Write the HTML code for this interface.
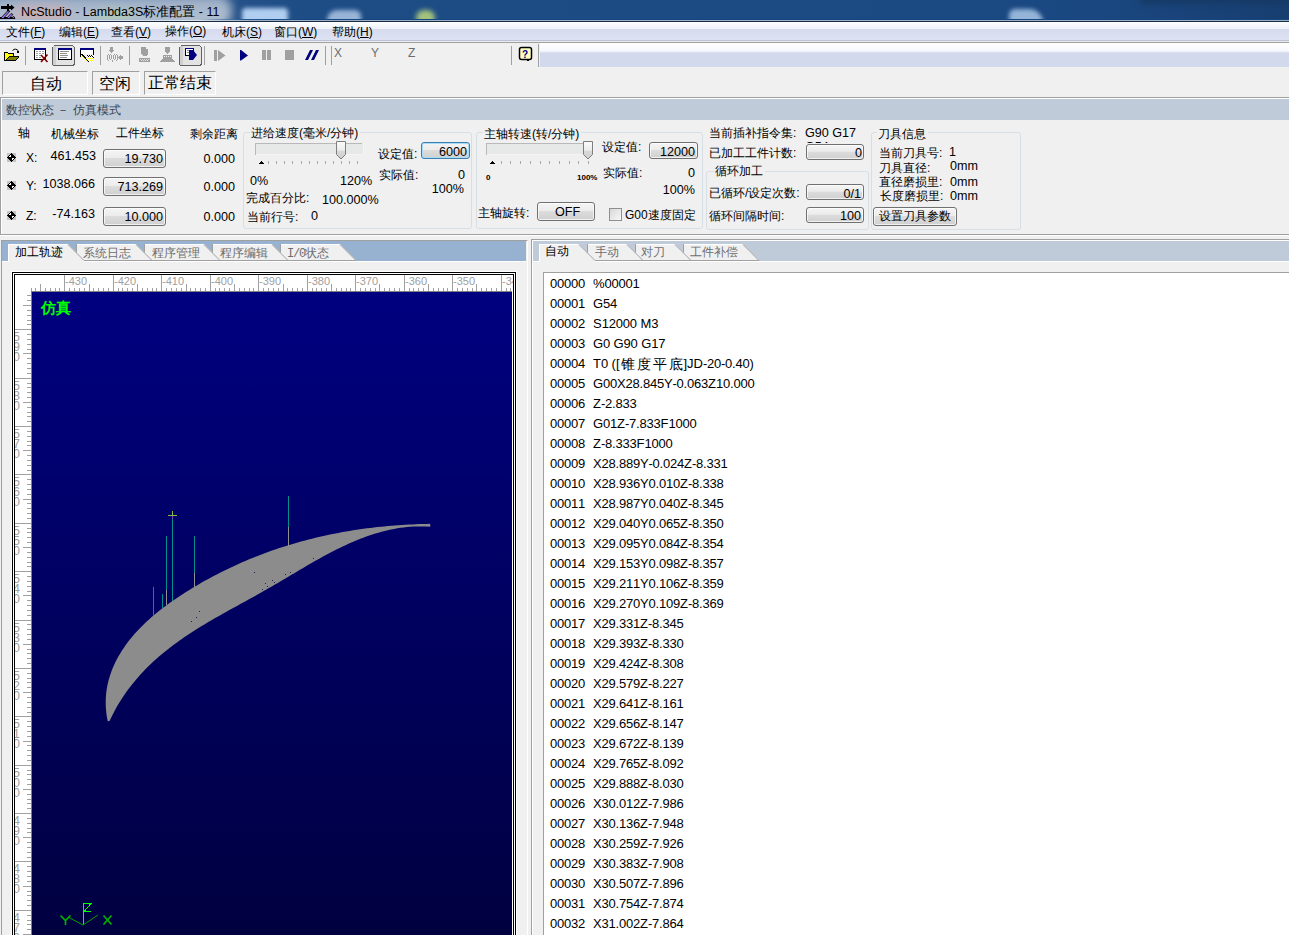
<!DOCTYPE html>
<html><head><meta charset="utf-8">
<style>
*{margin:0;padding:0;box-sizing:border-box}
html,body{width:1289px;height:935px;overflow:hidden;background:#f0f0f0;font-family:"Liberation Sans",sans-serif;font-size:12px;color:#000}
.a{position:absolute}
.t{position:absolute;white-space:pre;line-height:14px}
.n{font-size:12.6px}
.tg{color:#6d6d6d}
#title{left:0;top:0;width:1289px;height:21px;background:#1b4a82}
#menu{left:0;top:21px;width:1289px;height:22px;background:linear-gradient(#1c2c40 0,#1c2c40 1px,#fdfeff 1px,#eef1f8 8px,#d5dbee 8px,#dde3f3 19px,#bcc2d6 19px,#bcc2d6 20px,#ececec 20px,#ececec 21px,#a0a0a0 21px,#a0a0a0 22px)}
.sunk{position:absolute;border-top:1px solid #a0a0a0;border-left:1px solid #a0a0a0;border-bottom:1px solid #fff;border-right:1px solid #fff}
.btn{position:absolute;border:1px solid #707070;border-radius:3px;background:linear-gradient(#f4f4f4,#ececec 45%,#dcdcdc 50%,#d0d0d0);box-shadow:inset 0 0 0 1px rgba(255,255,255,.7)}
.grp{position:absolute;border:1px solid #d5dfe5;border-radius:3px}
.glb{position:absolute;height:4px;background:#f0f0f0}
.hl{position:absolute;height:1px;background:#a0a0a0}
.dia{position:absolute;width:9px;height:9px;background:#c8c8c8}
.dia:after{content:"";position:absolute;left:1px;top:1px;width:7px;height:7px;background:#000;transform:rotate(45deg)}
.chk{position:absolute;width:13px;height:13px;border:1px solid #8f8f8f;background:linear-gradient(135deg,#d8d8d8,#f8f8f8)}
.sel{border-color:#3c7fb1;box-shadow:inset 0 0 0 1px #a8dcf6}
</style></head><body>
<div id="title" class="a" style="overflow:hidden">
<div class="a" style="left:0;top:0;width:1289px;height:21px;background:linear-gradient(90deg,#3a6090 0,#1e4d86 300px,#1b4a83 900px,#1a4780 1100px,#183e70 1289px)"></div>
<div class="a" style="left:1140px;top:-6px;width:180px;height:10px;background:#163a66;filter:blur(3px)"></div>
<div class="a" style="left:242px;top:8px;width:46px;height:18px;background:#b0cef0;border-radius:4px;filter:blur(2px)"></div>
<div class="a" style="left:327px;top:10px;width:34px;height:16px;background:#98b4d6;border-radius:10px 6px 0 0;filter:blur(2px)"></div>
<div class="a" style="left:416px;top:10px;width:19px;height:16px;background:#a4c47c;border-radius:9px;filter:blur(2.5px)"></div>
<div class="a" style="left:1009px;top:9px;width:34px;height:16px;background:#94b4d8;border-radius:6px 14px 0 0;filter:blur(2px)"></div>
<div class="a" style="left:-12px;top:-6px;width:244px;height:34px;background:linear-gradient(#8ea4c0,#a8b8cc 40%,#b4c2d2);border-radius:16px;filter:blur(5px)"></div>
<div class="a" style="left:14px;top:6px;width:56px;height:18px;background:#ccaeb2;border-radius:10px;filter:blur(6px);opacity:.85"></div>
<div class="a" style="left:96px;top:10px;width:36px;height:14px;background:#b0ccb4;border-radius:8px;filter:blur(5px);opacity:.8"></div>
<div class="a" style="left:0;top:19px;width:1289px;height:1px;background:linear-gradient(90deg,#a8b8cc 0,#b0bece 200px,#2a5a90 240px,#16467f 300px)"></div>
<div class="a" style="left:0;top:20px;width:1289px;height:1px;background:linear-gradient(90deg,#dce2ec 0,#d8e0ea 200px,#9aaec8 250px,#9aaec8)"></div>
</div>

<svg class="a" style="left:0;top:0" width="20" height="21">
<g shape-rendering="crispEdges" fill="#000"><rect x="1" y="6" width="10" height="3"/><rect x="7" y="4" width="2" height="7"/><rect x="0" y="17" width="15" height="2"/></g>
<path d="M11,4.5L14.5,7.5L11,10.5z" fill="#000"/>
<path d="M0.5,18.5L7.5,11H10L3.5,18.5z" fill="#a070f8" stroke="#000" stroke-width="0.8"/>
<path d="M6.5,18.5L11,13.5L13,14.5L9,18.5z" fill="#a070f8" stroke="#000" stroke-width="0.8"/>
<path d="M11.5,18.5L13.5,16.2L15,18.5z" fill="#a070f8" stroke="#000" stroke-width="0.8"/>
</svg>
<div id="menu" class="a"></div>
<div class="a" style="left:540px;top:43px;width:749px;height:24px;background:linear-gradient(#ffffff,#f7f8fc 8px,#d3d9ec 10px,#d3d9ec)"></div>
<svg class="a" style="left:0;top:43px" width="560" height="25" shape-rendering="crispEdges">
<g transform="translate(0,-43)">
<!-- open folder -->
<path d="M4,52h4v1h6v3h5v1l-4,4H4z" fill="#000"/>
<path d="M5,53h3v1h5v2H9l-4,4z" fill="#ffff00"/>
<path d="M9,57h9l-3,3H6z" fill="#808000"/>
<path d="M12.5,50.5q3,-3 6,0.5" stroke="#000" fill="none" shape-rendering="auto"/>
<path d="M17,51h2v2h-2z" fill="#000"/>
<!-- separators -->
<path d="M25.5,46V65M100.5,46V65M129.5,46V65M204.5,46V65M325.5,46V65M331.5,46V65M511.5,46V65M538.5,44V67" stroke="#a0a0a0"/>
<!-- icon table with X -->
<rect x="34" y="48" width="12" height="12" fill="#000"/>
<rect x="34" y="48" width="12" height="2" fill="#000080"/>
<rect x="35" y="50" width="10" height="9" fill="#fff"/>
<path d="M36,51.5h2M39,51.5h2M42,51.5h2M36,53.5h2M39,53.5h2M42,53.5h2M36,55.5h2M39,55.5h2M36,57.5h2M39,57.5h2" stroke="#a0a0a0"/>
<path d="M41,55L47.5,62M47.5,54.5L41,62" stroke="#800000" stroke-width="1.6" shape-rendering="auto"/>
<!-- pressed button 1 -->
<rect x="52.5" y="45.5" width="22" height="20" rx="3" fill="#e3e3e3" stroke="#606060"/>
<rect x="53" y="46" width="3" height="19" fill="#d0d0d0"/>
<rect x="58" y="48" width="14" height="12" fill="#000"/>
<rect x="58" y="48" width="14" height="2" fill="#000080"/>
<rect x="59" y="50" width="12" height="9" fill="#fff"/>
<path d="M60,51.5h9M60,53.5h7M60,55.5h8M60,57.5h7" stroke="#909090"/>
<!-- icon 4 -->
<defs>
<pattern id="dk" width="2" height="2" patternUnits="userSpaceOnUse"><rect width="2" height="2" fill="#fff"/><rect width="1" height="1" fill="#000"/><rect x="1" y="1" width="1" height="1" fill="#000"/></pattern>
<pattern id="dy" width="2" height="2" patternUnits="userSpaceOnUse"><rect width="2" height="2" fill="#fff"/><rect width="1" height="1" fill="#ffff00"/><rect x="1" y="1" width="1" height="1" fill="#ffff00"/></pattern>
</defs>
<rect x="80" y="48" width="14" height="2" fill="#000080"/>
<rect x="80" y="50" width="1" height="7" fill="#000"/>
<rect x="93" y="50" width="1" height="5" fill="#000"/>
<rect x="81" y="50" width="12" height="4" fill="#fff"/>
<rect x="81" y="54" width="3" height="3" fill="#fff"/>
<path d="M81,54h2l6,8h-2z" fill="#000"/>
<path d="M82,56h1l5,6h-1z" fill="#ffff00"/>
<path d="M86,55h6l2,2v3h-3l-3,-2z" fill="url(#dk)"/>
<path d="M87,57l3,5h4v-3l-2,-2z" fill="url(#dy)"/>
<!-- (0,0) icon gray -->
<g fill="#a0a0a0">
<rect x="110" y="47" width="3" height="3"/><path d="M108,50h7l-3.5,3z"/>
<path d="M107,55h1v5h-1zM108,54h1v1h-1zM108,60h1v1h-1z"/>
<path d="M109,55h1v4h-1zM111,55h1v4h-1zM110,54h1v1h-1zM110,59h1v1h-1z"/>
<path d="M113,55h1v4h-1zM115,55h1v4h-1zM114,54h1v1h-1zM114,59h1v1h-1z"/>
<path d="M117,55h1v5h-1zM116,54h1v1h-1zM116,60h1v1h-1z"/>
<rect x="112" y="60" width="1" height="2"/>
<path d="M118,57.5l3,-3v6z"/><rect x="120" y="56" width="3" height="3"/>
</g>
<!-- tool icon gray -->
<g fill="#a0a0a0">
<path d="M141,47h5v2h2v5l-2,2h-3l-2,-2z"/>
<rect x="139" y="58" width="11" height="4"/>
</g>
<path d="M140,59.5h1M142,59.5h1M144,59.5h1M146,59.5h1M148,59.5h1M141,60.5h1M143,60.5h1M145,60.5h1M147,60.5h1" stroke="#e0e0e0"/>
<g fill="#a0a0a0">
<rect x="165" y="47" width="5" height="4"/><path d="M164,51h7l-3.5,3z"/>
<rect x="163" y="55" width="9" height="4"/><path d="M162,59h11l2,3H160z"/>
</g>
<path d="M164,56.5h1M166,56.5h1M168,56.5h1M170,56.5h1" stroke="#f0f0f0"/>
<!-- pressed button 2 -->
<rect x="179.5" y="45.5" width="22" height="20" rx="3" fill="#e3e3e3" stroke="#606060"/>
<rect x="180" y="46" width="3" height="19" fill="#d0d0d0"/>
<rect x="185" y="48" width="9" height="8" fill="#000"/>
<rect x="185" y="48" width="9" height="1" fill="#000080"/>
<rect x="186" y="49" width="7" height="6" fill="#fff"/>
<path d="M187,50.5h4M187,52.5h4" stroke="#909090"/>
<path d="M189,50h4l4,5l-4,5h-4z" fill="#000080" shape-rendering="auto"/>
<!-- play controls -->
<g fill="#a0a0a0">
<rect x="214" y="50" width="3" height="11"/><path d="M218,50l7.5,5.5L218,61z" shape-rendering="auto"/>
<rect x="262" y="50" width="4" height="10"/><rect x="267" y="50" width="4" height="10"/>
<rect x="285" y="50" width="9" height="10"/>
</g>
<path d="M240,50h1l7,5.5l-7,5h-1z" fill="#000080" shape-rendering="auto"/>
<path d="M305,60l5,-10h3l-5,10zM311,60l5,-10h3l-5,10z" fill="#000080" shape-rendering="auto"/>
<!-- help -->
<rect x="519.5" y="47.5" width="12" height="12" rx="2" fill="#ffffc0" stroke="#000" stroke-width="1.5" shape-rendering="auto"/>
<path d="M527,59l1,3l2,-3z" fill="#000"/>
<text x="522" y="57.5" font-size="10" font-weight="bold" fill="#000080" font-family="Liberation Sans" shape-rendering="auto">?</text>
</g>
</svg>
<div class="sunk" style="left:2px;top:71px;width:86px;height:24px"></div>
<div class="sunk" style="left:92px;top:71px;width:48px;height:24px"></div>
<div class="sunk" style="left:144px;top:71px;width:72px;height:24px"></div>
<div class="hl" style="left:0;top:97px;width:1289px"></div>
<div class="a" style="left:1px;top:98px;width:1288px;height:1px;background:#fff"></div>
<div class="a" style="left:2px;top:99px;width:1287px;height:21px;background:#bfcbd9"></div>
<div class="a" style="left:0;top:97px;width:1px;height:138px;background:#a0a0a0"></div>
<div class="a" style="left:1px;top:98px;width:1px;height:136px;background:#fff"></div>
<div class="hl" style="left:0;top:234px;width:1289px"></div>
<div class="a" style="left:0;top:235px;width:1289px;height:1px;background:#fff"></div>
<svg class="a" style="left:0;top:0" width="20" height="235" shape-rendering="crispEdges"><rect x="7" y="153" width="9" height="9" fill="#c4c4c4"/><g fill="#000"><rect x="11" y="153" width="1" height="1"/><rect x="10" y="154" width="3" height="1"/><rect x="9" y="155" width="5" height="1"/><rect x="8" y="156" width="7" height="1"/><rect x="7" y="157" width="9" height="1"/><rect x="8" y="158" width="7" height="1"/><rect x="9" y="159" width="5" height="1"/><rect x="10" y="160" width="3" height="1"/><rect x="11" y="161" width="1" height="1"/></g><g fill="#fff"><rect x="10" y="155" width="1" height="2"/><rect x="9" y="156" width="1" height="1"/><rect x="12" y="158" width="2" height="1"/><rect x="12" y="159" width="1" height="1"/></g></svg>
<svg class="a" style="left:0;top:0" width="20" height="235" shape-rendering="crispEdges"><rect x="7" y="181" width="9" height="9" fill="#c4c4c4"/><g fill="#000"><rect x="11" y="181" width="1" height="1"/><rect x="10" y="182" width="3" height="1"/><rect x="9" y="183" width="5" height="1"/><rect x="8" y="184" width="7" height="1"/><rect x="7" y="185" width="9" height="1"/><rect x="8" y="186" width="7" height="1"/><rect x="9" y="187" width="5" height="1"/><rect x="10" y="188" width="3" height="1"/><rect x="11" y="189" width="1" height="1"/></g><g fill="#fff"><rect x="10" y="183" width="1" height="2"/><rect x="9" y="184" width="1" height="1"/><rect x="12" y="186" width="2" height="1"/><rect x="12" y="187" width="1" height="1"/></g></svg>
<svg class="a" style="left:0;top:0" width="20" height="235" shape-rendering="crispEdges"><rect x="7" y="211" width="9" height="9" fill="#c4c4c4"/><g fill="#000"><rect x="11" y="211" width="1" height="1"/><rect x="10" y="212" width="3" height="1"/><rect x="9" y="213" width="5" height="1"/><rect x="8" y="214" width="7" height="1"/><rect x="7" y="215" width="9" height="1"/><rect x="8" y="216" width="7" height="1"/><rect x="9" y="217" width="5" height="1"/><rect x="10" y="218" width="3" height="1"/><rect x="11" y="219" width="1" height="1"/></g><g fill="#fff"><rect x="10" y="213" width="1" height="2"/><rect x="9" y="214" width="1" height="1"/><rect x="12" y="216" width="2" height="1"/><rect x="12" y="217" width="1" height="1"/></g></svg>
<div class="btn" style="left:103px;top:149px;width:63px;height:19px"></div>
<div class="btn" style="left:103px;top:177px;width:63px;height:19px"></div>
<div class="btn" style="left:103px;top:207px;width:63px;height:19px"></div>
<div class="grp" style="left:243px;top:132px;width:229px;height:97px"></div>
<svg class="a" style="left:240px;top:135px" width="370" height="35" shape-rendering="crispEdges">
<g transform="translate(-240,-135)">
<rect x="255" y="143" width="108" height="12" fill="#e7e9e9"/>
<path d="M255.5,155V143.5H362" stroke="#b9b9b9" fill="none"/>
<path d="M256,154.5H363V143" stroke="#f4f4f4" fill="none"/>
<path d="M258,164h6l-3,-3z" fill="#000"/>
<path d="M268.5,161V164M276.5,161V164M284.5,161V164M292.5,161V164M301.5,161V164M309.5,161V164M317.5,161V164M325.5,161V164M333.5,161V164M341.5,161V164M349.5,161V164M357.5,161V164" stroke="#a8a8a8"/>
<path d="M336.5,141.5h9v13l-4.5,4.5l-4.5,-4.5z" fill="url(#thg)" stroke="#7e7e7e" shape-rendering="auto"/>
<rect x="486" y="143" width="107" height="12" fill="#e7e9e9"/>
<path d="M486.5,155V143.5H592" stroke="#b9b9b9" fill="none"/>
<path d="M487,154.5H593V143" stroke="#f4f4f4" fill="none"/>
<path d="M489,164h6l-3,-3z" fill="#000"/>
<path d="M501.5,161V164M510.5,161V164M520.5,161V164M530.5,161V164M540.5,161V164M549.5,161V164M559.5,161V164M569.5,161V164M578.5,161V164M588.5,161V164" stroke="#a8a8a8"/>
<path d="M583.5,141.5h9v13l-4.5,4.5l-4.5,-4.5z" fill="url(#thg)" stroke="#7e7e7e" shape-rendering="auto"/>
<defs><linearGradient id="thg" x1="0" y1="0" x2="0" y2="1"><stop offset="0" stop-color="#fbfbfb"/><stop offset="0.5" stop-color="#ececec"/><stop offset="0.55" stop-color="#d8d8d8"/><stop offset="1" stop-color="#d0d0d0"/></linearGradient></defs>
</g>
</svg>

<div class="btn sel" style="left:421px;top:142px;width:49px;height:17px"></div>
<div class="grp" style="left:476px;top:132px;width:227px;height:97px"></div>
<div class="btn" style="left:649px;top:142px;width:49px;height:17px"></div>
<div class="btn" style="left:537px;top:202px;width:58px;height:19px"></div>
<div class="chk" style="left:609px;top:208px"></div>
<div class="btn" style="left:806px;top:144px;width:58px;height:16px"></div>
<div class="grp" style="left:706px;top:171px;width:163px;height:59px"></div>
<div class="btn" style="left:806px;top:184px;width:58px;height:16px"></div>
<div class="btn" style="left:806px;top:207px;width:58px;height:16px"></div>
<div class="grp" style="left:871px;top:132px;width:150px;height:98px"></div>
<div class="btn" style="left:873px;top:207px;width:84px;height:19px"></div>
<div class="a" style="left:805px;top:141px;width:40px;height:2px;overflow:hidden"><div class="t n" style="left:0;top:-1px">G54</div></div>
<div class="a" style="left:1px;top:240px;width:527px;height:700px;border-left:1px solid #a0a0a0;border-top:1px solid #a0a0a0;border-right:1px solid #fff"></div>
<div class="a" style="left:2px;top:241px;width:524px;height:20px;background:#97b1d0"></div>
<div class="a" style="left:531px;top:239px;width:760px;height:700px;border-left:1px solid #a0a0a0;border-top:1px solid #a0a0a0"></div>
<div class="a" style="left:532px;top:240px;width:760px;height:700px;border-left:1px solid #fff;border-top:1px solid #fff"></div>
<div class="a" style="left:533px;top:241px;width:756px;height:20px;background:#bfcbd9"></div>
<svg class="a" style="left:0;top:0" width="1289" height="935">
<path d="M2,261.5H526" stroke="#fff"/>
<polygon points="280,261 280,244 340,244 356,260 356,261" fill="#f0f0f0"/><path d="M281,244.5H340" stroke="#fff" fill="none"/><path d="M280.5,261V244" stroke="#a0a0a0" fill="none"/><path d="M340,244.5L356,260.5" stroke="#a0a0a0" fill="none"/><path d="M280,260.5H356" stroke="#a0a0a0" fill="none"/>
<polygon points="212,261 212,244 272,244 288,260 288,261" fill="#f0f0f0"/><path d="M213,244.5H272" stroke="#fff" fill="none"/><path d="M212.5,261V244" stroke="#a0a0a0" fill="none"/><path d="M272,244.5L288,260.5" stroke="#a0a0a0" fill="none"/><path d="M212,260.5H288" stroke="#a0a0a0" fill="none"/>
<polygon points="144,261 144,244 204,244 220,260 220,261" fill="#f0f0f0"/><path d="M145,244.5H204" stroke="#fff" fill="none"/><path d="M144.5,261V244" stroke="#a0a0a0" fill="none"/><path d="M204,244.5L220,260.5" stroke="#a0a0a0" fill="none"/><path d="M144,260.5H220" stroke="#a0a0a0" fill="none"/>
<polygon points="76,261 76,244 136,244 152,260 152,261" fill="#f0f0f0"/><path d="M77,244.5H136" stroke="#fff" fill="none"/><path d="M76.5,261V244" stroke="#a0a0a0" fill="none"/><path d="M136,244.5L152,260.5" stroke="#a0a0a0" fill="none"/><path d="M76,260.5H152" stroke="#a0a0a0" fill="none"/>
<polygon points="8,262 8,244 68,244 84,260 84,262" fill="#f0f0f0"/><path d="M8.5,262V244.5H68" stroke="#fff" fill="none"/><path d="M68,244.5L84,260.5" stroke="#a0a0a0" fill="none"/>
<path d="M533,261.5H1289" stroke="#fff"/>
<polygon points="683,261 683,244 743,244 759,260 759,261" fill="#f0f0f0"/><path d="M684,244.5H743" stroke="#fff" fill="none"/><path d="M683.5,261V244" stroke="#a0a0a0" fill="none"/><path d="M743,244.5L759,260.5" stroke="#a0a0a0" fill="none"/><path d="M683,260.5H759" stroke="#a0a0a0" fill="none"/>
<polygon points="635,261 635,244 675,244 691,260 691,261" fill="#f0f0f0"/><path d="M636,244.5H675" stroke="#fff" fill="none"/><path d="M635.5,261V244" stroke="#a0a0a0" fill="none"/><path d="M675,244.5L691,260.5" stroke="#a0a0a0" fill="none"/><path d="M635,260.5H691" stroke="#a0a0a0" fill="none"/>
<polygon points="587,261 587,244 627,244 643,260 643,261" fill="#f0f0f0"/><path d="M588,244.5H627" stroke="#fff" fill="none"/><path d="M587.5,261V244" stroke="#a0a0a0" fill="none"/><path d="M627,244.5L643,260.5" stroke="#a0a0a0" fill="none"/><path d="M587,260.5H643" stroke="#a0a0a0" fill="none"/>
<polygon points="539,262 539,244 579,244 595,260 595,262" fill="#f0f0f0"/><path d="M539.5,262V244.5H579" stroke="#fff" fill="none"/><path d="M579,244.5L595,260.5" stroke="#a0a0a0" fill="none"/>
</svg>
<div class="a" style="left:543px;top:272px;width:750px;height:670px;background:#fff;border-left:1px solid #a0a0a0;border-top:1px solid #a0a0a0"></div>
<svg class="a" style="left:0;top:0" width="1289" height="935" font-family="Liberation Sans" font-size="13">
<text y="288" x="550.0 557.0 564.0 571.0 578.0">00000</text>
<text y="288" x="593.0 604.5 611.5 618.5 625.5 632.5">%00001</text>
<text y="308" x="550.0 557.0 564.0 571.0 578.0">00001</text>
<text y="308" x="593.0 603.0 610.0">G54</text>
<text y="328" x="550.0 557.0 564.0 571.0 578.0">00002</text>
<text y="328" x="593.0 601.8 608.8 615.8 622.8 629.8 636.8 640.4 651.2">S12000 M3</text>
<text y="348" x="550.0 557.0 564.0 571.0 578.0">00003</text>
<text y="348" x="593.0 603.0 610.0 613.6 623.6 630.6 637.6 641.2 651.2 658.2">G0 G90 G17</text>
<text y="368" x="550.0 557.0 564.0 571.0 578.0">00004</text>
<text y="368" x="593.0 601.0 608.0 611.6 615.9 683.5 687.1 693.6 703.0 707.0 714.0 721.0 725.0 732.0 735.5 742.5 749.5">T0 ([]JD-20-0.40)</text>
<text y="369" font-size="13.5" x="621.0 637.0 653.0 669.0">锥度平底</text>
<text y="388" x="550.0 557.0 564.0 571.0 578.0">00005</text>
<text y="388" x="593.0 603.0 610.0 617.0 625.5 632.5 639.5 643.0 650.0 657.0 664.0 672.5 676.5 683.5 687.0 694.0 701.0 708.0 716.0 723.0 730.0 733.5 740.5 747.5">G00X28.845Y-0.063Z10.000</text>
<text y="408" x="550.0 557.0 564.0 571.0 578.0">00006</text>
<text y="408" x="593.0 601.0 605.0 612.0 615.5 622.5 629.5">Z-2.833</text>
<text y="428" x="550.0 557.0 564.0 571.0 578.0">00007</text>
<text y="428" x="593.0 603.0 610.0 617.0 625.0 629.0 636.0 639.5 646.5 653.5 660.5 668.5 675.5 682.5 689.5">G01Z-7.833F1000</text>
<text y="448" x="550.0 557.0 564.0 571.0 578.0">00008</text>
<text y="448" x="593.0 601.0 605.0 612.0 615.5 622.5 629.5 636.5 644.5 651.5 658.5 665.5">Z-8.333F1000</text>
<text y="468" x="550.0 557.0 564.0 571.0 578.0">00009</text>
<text y="468" x="593.0 601.5 608.5 615.5 619.0 626.0 633.0 640.0 648.5 652.5 659.5 663.0 670.0 677.0 684.0 692.0 696.0 703.0 706.5 713.5 720.5">X28.889Y-0.024Z-8.331</text>
<text y="488" x="550.0 557.0 564.0 571.0 578.0">00010</text>
<text y="488" x="593.0 601.5 608.5 615.5 619.0 626.0 633.0 640.0 648.5 655.5 659.0 666.0 673.0 680.0 688.0 692.0 699.0 702.5 709.5 716.5">X28.936Y0.010Z-8.338</text>
<text y="508" x="550.0 557.0 564.0 571.0 578.0">00011</text>
<text y="508" x="593.0 601.5 608.5 615.5 619.0 626.0 633.0 640.0 648.5 655.5 659.0 666.0 673.0 680.0 688.0 692.0 699.0 702.5 709.5 716.5">X28.987Y0.040Z-8.345</text>
<text y="528" x="550.0 557.0 564.0 571.0 578.0">00012</text>
<text y="528" x="593.0 601.5 608.5 615.5 619.0 626.0 633.0 640.0 648.5 655.5 659.0 666.0 673.0 680.0 688.0 692.0 699.0 702.5 709.5 716.5">X29.040Y0.065Z-8.350</text>
<text y="548" x="550.0 557.0 564.0 571.0 578.0">00013</text>
<text y="548" x="593.0 601.5 608.5 615.5 619.0 626.0 633.0 640.0 648.5 655.5 659.0 666.0 673.0 680.0 688.0 692.0 699.0 702.5 709.5 716.5">X29.095Y0.084Z-8.354</text>
<text y="568" x="550.0 557.0 564.0 571.0 578.0">00014</text>
<text y="568" x="593.0 601.5 608.5 615.5 619.0 626.0 633.0 640.0 648.5 655.5 659.0 666.0 673.0 680.0 688.0 692.0 699.0 702.5 709.5 716.5">X29.153Y0.098Z-8.357</text>
<text y="588" x="550.0 557.0 564.0 571.0 578.0">00015</text>
<text y="588" x="593.0 601.5 608.5 615.5 619.0 626.0 633.0 640.0 648.5 655.5 659.0 666.0 673.0 680.0 688.0 692.0 699.0 702.5 709.5 716.5">X29.211Y0.106Z-8.359</text>
<text y="608" x="550.0 557.0 564.0 571.0 578.0">00016</text>
<text y="608" x="593.0 601.5 608.5 615.5 619.0 626.0 633.0 640.0 648.5 655.5 659.0 666.0 673.0 680.0 688.0 692.0 699.0 702.5 709.5 716.5">X29.270Y0.109Z-8.369</text>
<text y="628" x="550.0 557.0 564.0 571.0 578.0">00017</text>
<text y="628" x="593.0 601.5 608.5 615.5 619.0 626.0 633.0 640.0 648.0 652.0 659.0 662.5 669.5 676.5">X29.331Z-8.345</text>
<text y="648" x="550.0 557.0 564.0 571.0 578.0">00018</text>
<text y="648" x="593.0 601.5 608.5 615.5 619.0 626.0 633.0 640.0 648.0 652.0 659.0 662.5 669.5 676.5">X29.393Z-8.330</text>
<text y="668" x="550.0 557.0 564.0 571.0 578.0">00019</text>
<text y="668" x="593.0 601.5 608.5 615.5 619.0 626.0 633.0 640.0 648.0 652.0 659.0 662.5 669.5 676.5">X29.424Z-8.308</text>
<text y="688" x="550.0 557.0 564.0 571.0 578.0">00020</text>
<text y="688" x="593.0 601.5 608.5 615.5 619.0 626.0 633.0 640.0 648.0 652.0 659.0 662.5 669.5 676.5">X29.579Z-8.227</text>
<text y="708" x="550.0 557.0 564.0 571.0 578.0">00021</text>
<text y="708" x="593.0 601.5 608.5 615.5 619.0 626.0 633.0 640.0 648.0 652.0 659.0 662.5 669.5 676.5">X29.641Z-8.161</text>
<text y="728" x="550.0 557.0 564.0 571.0 578.0">00022</text>
<text y="728" x="593.0 601.5 608.5 615.5 619.0 626.0 633.0 640.0 648.0 652.0 659.0 662.5 669.5 676.5">X29.656Z-8.147</text>
<text y="748" x="550.0 557.0 564.0 571.0 578.0">00023</text>
<text y="748" x="593.0 601.5 608.5 615.5 619.0 626.0 633.0 640.0 648.0 652.0 659.0 662.5 669.5 676.5">X29.672Z-8.139</text>
<text y="768" x="550.0 557.0 564.0 571.0 578.0">00024</text>
<text y="768" x="593.0 601.5 608.5 615.5 619.0 626.0 633.0 640.0 648.0 652.0 659.0 662.5 669.5 676.5">X29.765Z-8.092</text>
<text y="788" x="550.0 557.0 564.0 571.0 578.0">00025</text>
<text y="788" x="593.0 601.5 608.5 615.5 619.0 626.0 633.0 640.0 648.0 652.0 659.0 662.5 669.5 676.5">X29.888Z-8.030</text>
<text y="808" x="550.0 557.0 564.0 571.0 578.0">00026</text>
<text y="808" x="593.0 601.5 608.5 615.5 619.0 626.0 633.0 640.0 648.0 652.0 659.0 662.5 669.5 676.5">X30.012Z-7.986</text>
<text y="828" x="550.0 557.0 564.0 571.0 578.0">00027</text>
<text y="828" x="593.0 601.5 608.5 615.5 619.0 626.0 633.0 640.0 648.0 652.0 659.0 662.5 669.5 676.5">X30.136Z-7.948</text>
<text y="848" x="550.0 557.0 564.0 571.0 578.0">00028</text>
<text y="848" x="593.0 601.5 608.5 615.5 619.0 626.0 633.0 640.0 648.0 652.0 659.0 662.5 669.5 676.5">X30.259Z-7.926</text>
<text y="868" x="550.0 557.0 564.0 571.0 578.0">00029</text>
<text y="868" x="593.0 601.5 608.5 615.5 619.0 626.0 633.0 640.0 648.0 652.0 659.0 662.5 669.5 676.5">X30.383Z-7.908</text>
<text y="888" x="550.0 557.0 564.0 571.0 578.0">00030</text>
<text y="888" x="593.0 601.5 608.5 615.5 619.0 626.0 633.0 640.0 648.0 652.0 659.0 662.5 669.5 676.5">X30.507Z-7.896</text>
<text y="908" x="550.0 557.0 564.0 571.0 578.0">00031</text>
<text y="908" x="593.0 601.5 608.5 615.5 619.0 626.0 633.0 640.0 648.0 652.0 659.0 662.5 669.5 676.5">X30.754Z-7.874</text>
<text y="928" x="550.0 557.0 564.0 571.0 578.0">00032</text>
<text y="928" x="593.0 601.5 608.5 615.5 619.0 626.0 633.0 640.0 648.0 652.0 659.0 662.5 669.5 676.5">X31.002Z-7.864</text>
</svg>
<div class="a" style="left:11px;top:271px;width:506px;height:670px;border:1px solid #fff;"></div>
<div class="a" style="left:12px;top:272px;width:504px;height:670px;border:1px solid #000;background:#fff"></div>
<div class="a" style="left:14px;top:274px;width:500px;height:670px;border:1px solid #000;"></div>
<div class="a" style="left:32px;top:292px;width:480px;height:643px;background:linear-gradient(#000080,#000040)"></div>
<svg class="a" style="left:0;top:0" width="1289" height="935" shape-rendering="crispEdges">
<defs><clipPath id="hr"><rect x="15" y="275" width="498" height="16"/></clipPath><clipPath id="vr"><rect x="15" y="292" width="16" height="643"/></clipPath></defs>
<path clip-path="url(#hr)" stroke="#a0a0a0" d="M31.5,288V291M35.5,288V291M40.5,284V291M45.5,288V291M50.5,288V291M55.5,288V291M59.5,288V291M64.5,275V291M69.5,288V291M74.5,288V291M79.5,288V291M84.5,288V291M89.5,284V291M93.5,288V291M98.5,288V291M103.5,288V291M108.5,288V291M113.5,275V291M118.5,288V291M122.5,288V291M127.5,288V291M132.5,288V291M137.5,284V291M142.5,288V291M147.5,288V291M152.5,288V291M156.5,288V291M161.5,275V291M166.5,288V291M171.5,288V291M176.5,288V291M181.5,288V291M186.5,284V291M190.5,288V291M195.5,288V291M200.5,288V291M205.5,288V291M210.5,275V291M215.5,288V291M219.5,288V291M224.5,288V291M229.5,288V291M234.5,284V291M239.5,288V291M244.5,288V291M249.5,288V291M253.5,288V291M258.5,275V291M263.5,288V291M268.5,288V291M273.5,288V291M278.5,288V291M283.5,284V291M287.5,288V291M292.5,288V291M297.5,288V291M302.5,288V291M307.5,275V291M312.5,288V291M316.5,288V291M321.5,288V291M326.5,288V291M331.5,284V291M336.5,288V291M341.5,288V291M346.5,288V291M350.5,288V291M355.5,275V291M360.5,288V291M365.5,288V291M370.5,288V291M375.5,288V291M379.5,284V291M384.5,288V291M389.5,288V291M394.5,288V291M399.5,288V291M404.5,275V291M409.5,288V291M413.5,288V291M418.5,288V291M423.5,288V291M428.5,284V291M433.5,288V291M438.5,288V291M443.5,288V291M447.5,288V291M452.5,275V291M457.5,288V291M462.5,288V291M467.5,288V291M472.5,288V291M476.5,284V291M481.5,288V291M486.5,288V291M491.5,288V291M496.5,288V291M501.5,275V291M506.5,288V291M510.5,288V291"/>
<g clip-path="url(#hr)" fill="#a0a0a0" font-size="11" font-family="Liberation Sans" shape-rendering="auto">
<text x="65" y="285">-430</text>
<text x="114" y="285">-420</text>
<text x="162" y="285">-410</text>
<text x="211" y="285">-400</text>
<text x="259" y="285">-390</text>
<text x="308" y="285">-380</text>
<text x="356" y="285">-370</text>
<text x="405" y="285">-360</text>
<text x="453" y="285">-350</text>
<text x="502" y="285">-340</text>
</g>
<path clip-path="url(#vr)" stroke="#a0a0a0" d="M27,295.5H31M27,300.5H31M23,305.5H31M27,310.5H31M27,315.5H31M27,320.5H31M27,324.5H31M15,329.5H31M27,334.5H31M27,339.5H31M27,344.5H31M27,349.5H31M23,353.5H31M27,358.5H31M27,363.5H31M27,368.5H31M27,373.5H31M15,378.5H31M27,383.5H31M27,387.5H31M27,392.5H31M27,397.5H31M23,402.5H31M27,407.5H31M27,412.5H31M27,416.5H31M27,421.5H31M15,426.5H31M27,431.5H31M27,436.5H31M27,441.5H31M27,445.5H31M23,450.5H31M27,455.5H31M27,460.5H31M27,465.5H31M27,470.5H31M15,474.5H31M27,479.5H31M27,484.5H31M27,489.5H31M27,494.5H31M23,499.5H31M27,503.5H31M27,508.5H31M27,513.5H31M27,518.5H31M15,523.5H31M27,528.5H31M27,532.5H31M27,537.5H31M27,542.5H31M23,547.5H31M27,552.5H31M27,557.5H31M27,562.5H31M27,566.5H31M15,571.5H31M27,576.5H31M27,581.5H31M27,586.5H31M27,591.5H31M23,595.5H31M27,600.5H31M27,605.5H31M27,610.5H31M27,615.5H31M15,620.5H31M27,624.5H31M27,629.5H31M27,634.5H31M27,639.5H31M23,644.5H31M27,649.5H31M27,653.5H31M27,658.5H31M27,663.5H31M15,668.5H31M27,673.5H31M27,678.5H31M27,682.5H31M27,687.5H31M23,692.5H31M27,697.5H31M27,702.5H31M27,707.5H31M27,712.5H31M15,716.5H31M27,721.5H31M27,726.5H31M27,731.5H31M27,736.5H31M23,741.5H31M27,745.5H31M27,750.5H31M27,755.5H31M27,760.5H31M15,765.5H31M27,770.5H31M27,774.5H31M27,779.5H31M27,784.5H31M23,789.5H31M27,794.5H31M27,799.5H31M27,803.5H31M27,808.5H31M15,813.5H31M27,818.5H31M27,823.5H31M27,828.5H31M27,832.5H31M23,837.5H31M27,842.5H31M27,847.5H31M27,852.5H31M27,857.5H31M15,861.5H31M27,866.5H31M27,871.5H31M27,876.5H31M27,881.5H31M23,886.5H31M27,891.5H31M27,895.5H31M27,900.5H31M27,905.5H31M15,910.5H31M27,915.5H31M27,920.5H31M27,924.5H31M27,929.5H31M23,934.5H31"/>
<g clip-path="url(#vr)" fill="#a0a0a0" font-size="11" font-family="Liberation Sans" shape-rendering="auto">
<text x="13" y="341" font-size="12.5">5</text>
<text x="13" y="351" font-size="12.5">9</text>
<text x="13" y="361" font-size="12.5">0</text>
<text x="13" y="390" font-size="12.5">5</text>
<text x="13" y="400" font-size="12.5">8</text>
<text x="13" y="410" font-size="12.5">0</text>
<text x="13" y="438" font-size="12.5">5</text>
<text x="13" y="448" font-size="12.5">7</text>
<text x="13" y="458" font-size="12.5">0</text>
<text x="13" y="486" font-size="12.5">5</text>
<text x="13" y="496" font-size="12.5">6</text>
<text x="13" y="506" font-size="12.5">0</text>
<text x="13" y="535" font-size="12.5">5</text>
<text x="13" y="545" font-size="12.5">5</text>
<text x="13" y="555" font-size="12.5">0</text>
<text x="13" y="583" font-size="12.5">5</text>
<text x="13" y="593" font-size="12.5">4</text>
<text x="13" y="603" font-size="12.5">0</text>
<text x="13" y="632" font-size="12.5">5</text>
<text x="13" y="642" font-size="12.5">3</text>
<text x="13" y="652" font-size="12.5">0</text>
<text x="13" y="680" font-size="12.5">5</text>
<text x="13" y="690" font-size="12.5">2</text>
<text x="13" y="700" font-size="12.5">0</text>
<text x="13" y="728" font-size="12.5">5</text>
<text x="13" y="738" font-size="12.5">1</text>
<text x="13" y="748" font-size="12.5">0</text>
<text x="13" y="777" font-size="12.5">5</text>
<text x="13" y="787" font-size="12.5">0</text>
<text x="13" y="797" font-size="12.5">0</text>
<text x="13" y="825" font-size="12.5">4</text>
<text x="13" y="835" font-size="12.5">9</text>
<text x="13" y="845" font-size="12.5">0</text>
<text x="13" y="873" font-size="12.5">4</text>
<text x="13" y="883" font-size="12.5">8</text>
<text x="13" y="893" font-size="12.5">0</text>
<text x="13" y="922" font-size="12.5">4</text>
<text x="13" y="932" font-size="12.5">7</text>
<text x="13" y="942" font-size="12.5">0</text>
</g>
<path d="M31.5,292V935M31,291.5H512" stroke="#808080"/>
<g shape-rendering="auto"><path fill="#8c8c8c" d="M107.73,721.20 106.99,717.40 106.43,713.64 106.03,709.93 105.79,706.26 105.70,702.63 105.77,699.04 105.98,695.51 106.34,692.01 106.83,688.56 107.46,685.15 108.22,681.79 109.10,678.48 110.10,675.21 111.21,671.99 112.43,668.81 113.77,665.68 115.20,662.60 116.73,659.57 118.35,656.58 120.06,653.64 121.85,650.74 123.73,647.89 125.69,645.09 127.72,642.34 129.83,639.62 132.01,636.96 134.25,634.33 136.57,631.75 138.94,629.21 141.38,626.71 143.88,624.25 146.42,621.83 149.03,619.45 151.68,617.11 154.38,614.80 157.12,612.54 159.90,610.31 162.72,608.12 165.58,605.96 168.47,603.84 171.39,601.75 174.34,599.69 177.31,597.67 180.30,595.68 183.32,593.72 186.35,591.79 189.39,589.90 192.44,588.03 195.51,586.19 198.58,584.38 201.67,582.60 204.77,580.85 207.87,579.13 210.99,577.44 214.12,575.77 217.25,574.14 220.40,572.53 223.55,570.96 226.72,569.41 229.89,567.88 233.08,566.39 236.27,564.92 239.47,563.49 242.68,562.08 245.90,560.70 249.13,559.34 252.37,558.01 255.62,556.71 258.87,555.44 262.13,554.19 265.40,552.98 268.68,551.78 271.97,550.62 275.27,549.48 278.57,548.37 281.88,547.28 285.20,546.22 288.53,545.19 291.86,544.18 295.20,543.20 298.55,542.24 301.91,541.31 305.27,540.41 308.64,539.53 312.02,538.67 315.40,537.84 318.79,537.04 322.19,536.26 325.59,535.51 329.00,534.78 332.42,534.07 335.84,533.39 339.27,532.74 342.70,532.11 346.14,531.50 349.59,530.91 353.04,530.36 356.49,529.82 359.96,529.31 363.42,528.82 366.90,528.35 370.37,527.91 373.86,527.50 377.35,527.10 380.84,526.73 384.34,526.38 387.84,526.05 391.34,525.75 394.86,525.47 398.37,525.21 401.89,524.97 405.42,524.76 408.94,524.56 412.47,524.39 416.01,524.25 419.55,524.12 423.09,524.01 426.64,523.93 430.19,523.87 L430.33,526.76 426.91,526.56 423.52,526.44 420.15,526.41 416.81,526.46 413.49,526.59 410.20,526.80 406.93,527.09 403.68,527.44 400.45,527.87 397.25,528.37 394.06,528.93 390.90,529.56 387.75,530.24 384.63,530.99 381.53,531.80 378.44,532.66 375.37,533.57 372.32,534.54 369.28,535.55 366.27,536.61 363.27,537.71 360.28,538.85 357.31,540.04 354.35,541.26 351.40,542.53 348.47,543.82 345.55,545.16 342.64,546.52 339.74,547.92 336.85,549.34 333.98,550.80 331.11,552.27 328.24,553.78 325.39,555.30 322.54,556.85 319.70,558.42 316.87,560.00 314.04,561.61 311.21,563.22 308.39,564.85 305.57,566.49 302.75,568.14 299.94,569.80 297.12,571.47 294.31,573.14 291.50,574.81 288.68,576.49 285.87,578.16 283.05,579.83 280.23,581.50 277.40,583.17 274.57,584.83 271.74,586.48 268.90,588.12 266.06,589.75 263.21,591.37 260.36,592.98 257.50,594.58 254.64,596.17 251.78,597.76 248.91,599.34 246.05,600.92 243.18,602.49 240.32,604.06 237.46,605.64 234.60,607.21 231.74,608.79 228.89,610.37 226.04,611.95 223.20,613.54 220.37,615.14 217.55,616.75 214.73,618.36 211.92,619.99 209.12,621.62 206.34,623.27 203.56,624.94 200.80,626.62 198.05,628.32 195.31,630.03 192.59,631.76 189.89,633.52 187.20,635.29 184.53,637.09 181.88,638.91 179.25,640.76 176.64,642.63 174.04,644.53 171.47,646.46 168.93,648.42 166.40,650.41 163.90,652.43 161.43,654.48 158.98,656.57 156.56,658.69 154.16,660.85 151.80,663.04 149.47,665.26 147.17,667.53 144.90,669.82 142.67,672.16 140.47,674.53 138.31,676.94 136.18,679.39 134.10,681.88 132.05,684.40 130.04,686.97 128.08,689.57 126.16,692.22 124.28,694.91 122.45,697.64 120.67,700.42 118.93,703.23 117.24,706.09 115.60,709.00 114.02,711.95 112.48,714.94 111.00,717.98 109.57,721.07Z"/></g>
<g fill="#202050"><rect x="254" y="572" width="1" height="1"/><rect x="265" y="583" width="1" height="1"/><rect x="267" y="586" width="1" height="1"/><rect x="262" y="589" width="1" height="1"/><rect x="272" y="580" width="1" height="1"/><rect x="274" y="582" width="1" height="1"/><rect x="285" y="574" width="1" height="1"/><rect x="290" y="572" width="1" height="1"/><rect x="313" y="558" width="1" height="1"/><rect x="199" y="611" width="1" height="1"/><rect x="196" y="617" width="1" height="1"/><rect x="191" y="621" width="1" height="1"/></g>
<path d="M153.5,587V616" stroke="#008f8f"/>
<path d="M162.5,594V608" stroke="#008f8f"/>
<path d="M166.5,536V590" stroke="#008f8f"/><path d="M166.5,590V605" stroke="#909090"/>
<path d="M172.5,519V601" stroke="#008f8f"/>
<path d="M194.5,536V573" stroke="#008f8f"/><path d="M194.5,573V587" stroke="#909090"/>
<path d="M288.5,496V527" stroke="#008f8f"/><path d="M288.5,527V547" stroke="#909090"/>
<path d="M168,515.5H177M172.5,511V519" stroke="#80c040"/><path d="M172.5,516V519" stroke="#8040c0"/>
<path d="M83.5,903V925" stroke="#00ff00"/>
<path d="M83,925L68,917M83,925L98,915" stroke="#00a000" shape-rendering="auto"/>
<path d="M84,903.5H91L84,911.5H91" stroke="#00ff00" fill="none"/>
<path d="M60.5,915.5L65.5,920.5L70.5,915.5M65.5,920V925" stroke="#00b000" stroke-width="1.7" fill="none" shape-rendering="auto"/>
<path d="M103.5,915.5L111.5,924.5M111.5,915.5L103.5,924.5" stroke="#00b000" stroke-width="1.7" fill="none" shape-rendering="auto"/>
</svg>
<div class="t" style="left:41px;top:299px;font-size:15px;font-weight:bold;color:#00ff00;line-height:18px">仿真</div>
<div class="t" style="left:21.00px;top:5.00px;font-size:12.5px">NcStudio - Lambda3S标准配置 - 11</div>
<div class="t" style="left:6.00px;top:25.00px;">文件(<u>F</u>)</div>
<div class="t" style="left:59.00px;top:25.00px;">编辑(<u>E</u>)</div>
<div class="t" style="left:111.00px;top:25.00px;">查看(<u>V</u>)</div>
<div class="t" style="left:165.00px;top:24.00px;">操作(<u>O</u>)</div>
<div class="t" style="left:222.00px;top:25.00px;">机床(<u>S</u>)</div>
<div class="t" style="left:274.00px;top:25.00px;">窗口(<u>W</u>)</div>
<div class="t" style="left:332.00px;top:25.00px;">帮助(<u>H</u>)</div>
<div class="t tg" style="left:334.00px;top:46.00px;">X</div>
<div class="t tg" style="left:371.00px;top:46.00px;">Y</div>
<div class="t tg" style="left:408.00px;top:46.00px;">Z</div>
<div class="t" style="left:30.00px;top:75.00px;font-size:16px;line-height:18px">自动</div>
<div class="t" style="left:99.00px;top:75.00px;font-size:16px;line-height:18px">空闲</div>
<div class="t" style="left:148.00px;top:74.00px;font-size:16px;line-height:18px">正常结束</div>
<div class="t" style="left:6.00px;top:103.00px;color:#3c4650">数控状态 － 仿真模式</div>
<div class="t" style="left:18.00px;top:126.00px;">轴</div>
<div class="t" style="left:51.00px;top:127.00px;">机械坐标</div>
<div class="t" style="left:116.00px;top:126.00px;">工件坐标</div>
<div class="t" style="left:190.00px;top:127.00px;">剩余距离</div>
<div class="t" style="left:26.00px;top:151.00px;">X:</div>
<div class="t" style="left:26.00px;top:179.00px;">Y:</div>
<div class="t" style="left:26.00px;top:209.00px;">Z:</div>
<div class="t n" style="right:1193.00px;top:149.00px;">461.453</div>
<div class="t n" style="right:1194.00px;top:177.00px;">1038.066</div>
<div class="t n" style="right:1194.00px;top:207.00px;">-74.163</div>
<div class="t n" style="right:1126.00px;top:152.00px;">19.730</div>
<div class="t n" style="right:1126.00px;top:180.00px;">713.269</div>
<div class="t n" style="right:1126.00px;top:210.00px;">10.000</div>
<div class="t n" style="right:1054.00px;top:152.00px;">0.000</div>
<div class="t n" style="right:1054.00px;top:180.00px;">0.000</div>
<div class="t n" style="right:1054.00px;top:210.00px;">0.000</div>
<div class="t" style="left:250.00px;top:126.00px;background:#f0f0f0;padding:0 2px 0 1px">进给速度(毫米/分钟)</div>
<div class="t n" style="left:250.00px;top:174.00px;">0%</div>
<div class="t n" style="left:340.00px;top:174.00px;">120%</div>
<div class="t" style="left:378.00px;top:147.00px;">设定值:</div>
<div class="t n" style="right:822.00px;top:145.00px;">6000</div>
<div class="t" style="left:379.00px;top:168.00px;">实际值:</div>
<div class="t n" style="right:824.00px;top:168.00px;">0</div>
<div class="t n" style="right:825.00px;top:182.00px;">100%</div>
<div class="t" style="left:246.00px;top:191.00px;">完成百分比:</div>
<div class="t n" style="left:322.00px;top:193.00px;">100.000%</div>
<div class="t" style="left:247.00px;top:210.00px;">当前行号:</div>
<div class="t n" style="left:311.00px;top:209.00px;">0</div>
<div class="t" style="left:483.00px;top:127.00px;background:#f0f0f0;padding:0 2px 0 1px">主轴转速(转/分钟)</div>
<div class="t" style="left:486.00px;top:171.00px;font-size:8px;font-weight:bold">0</div>
<div class="t" style="left:577.00px;top:171.00px;font-size:8px;font-weight:bold">100%</div>
<div class="t" style="left:602.00px;top:140.00px;">设定值:</div>
<div class="t n" style="right:594.00px;top:145.00px;">12000</div>
<div class="t" style="left:603.00px;top:166.00px;">实际值:</div>
<div class="t n" style="right:594.00px;top:166.00px;">0</div>
<div class="t n" style="right:594.00px;top:183.00px;">100%</div>
<div class="t" style="left:478.00px;top:206.00px;">主轴旋转:</div>
<div class="t n" style="left:555.00px;top:205.00px;">OFF</div>
<div class="t" style="left:625.00px;top:208.00px;">G00速度固定</div>
<div class="t" style="left:709.00px;top:126.00px;">当前插补指令集:</div>
<div class="t n" style="left:805.00px;top:126.00px;">G90 G17</div>
<div class="t" style="left:709.00px;top:146.00px;">已加工工件计数:</div>
<div class="t n" style="right:427.00px;top:146.00px;">0</div>
<div class="t" style="left:714.00px;top:164.00px;background:#f0f0f0;padding:0 2px 0 1px">循环加工</div>
<div class="t" style="left:709.00px;top:186.00px;">已循环/设定次数:</div>
<div class="t n" style="right:428.00px;top:187.00px;">0/1</div>
<div class="t" style="left:709.00px;top:209.00px;">循环间隔时间:</div>
<div class="t n" style="right:428.00px;top:209.00px;">100</div>
<div class="t" style="left:877.00px;top:127.00px;background:#f0f0f0;padding:0 2px 0 1px">刀具信息</div>
<div class="t" style="left:879.00px;top:146.00px;">当前刀具号:</div>
<div class="t n" style="left:949.00px;top:145.00px;">1</div>
<div class="t" style="left:879.00px;top:161.00px;">刀具直径:</div>
<div class="t n" style="left:950.00px;top:159.00px;">0mm</div>
<div class="t" style="left:879.00px;top:175.00px;">直径磨损里:</div>
<div class="t n" style="left:950.00px;top:175.00px;">0mm</div>
<div class="t" style="left:880.00px;top:189.00px;">长度磨损里:</div>
<div class="t n" style="left:950.00px;top:189.00px;">0mm</div>
<div class="t" style="left:879.00px;top:209.00px;">设置刀具参数</div>
<div class="t" style="left:15.00px;top:245.00px;">加工轨迹</div>
<div class="t tg" style="left:83.00px;top:246.00px;">系统日志</div>
<div class="t tg" style="left:152.00px;top:246.00px;">程序管理</div>
<div class="t tg" style="left:220.00px;top:246.00px;">程序编辑</div>
<div class="t tg" style="left:287.00px;top:246.00px;"><span style="font-family:Liberation Mono;letter-spacing:-1.2px">I/0</span>状态</div>
<div class="t" style="left:545.00px;top:244.00px;">自动</div>
<div class="t tg" style="left:595.00px;top:245.00px;">手动</div>
<div class="t tg" style="left:641.00px;top:245.00px;">对刀</div>
<div class="t tg" style="left:690.00px;top:245.00px;">工件补偿</div>
</body></html>
